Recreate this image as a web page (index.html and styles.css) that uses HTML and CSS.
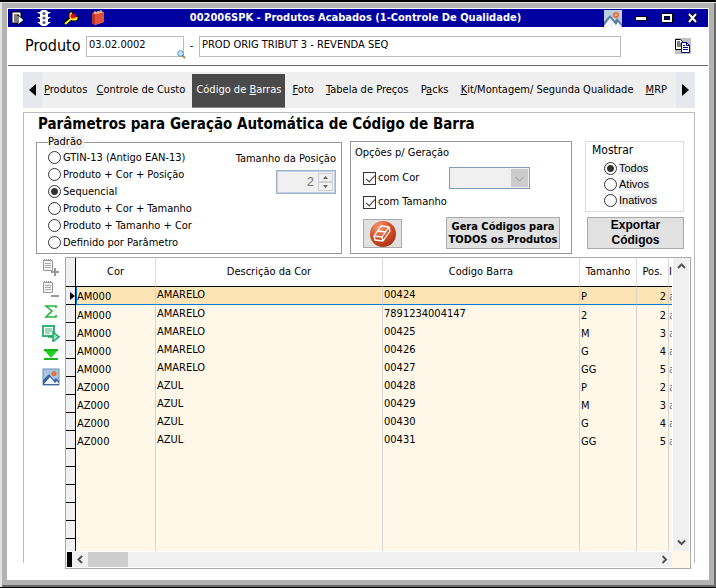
FILE: index.html
```html
<!doctype html>
<html lang="pt-BR">
    <head>
        <meta charset="utf-8">
        <title>002006SPK - Produtos Acabados</title>
        <link rel="stylesheet" href="styles.css">
    </head>

    <body>
    <div class="window">
        <header class="titlebar">
            <div class="titlebar-side">
                <button aria-label="Menu">
                    <svg width="14" height="16" viewBox="0 0 14 16"><path d="M1 2h9v11H1z" fill="#fff" stroke="#000"/><path d="M3 5h5M3 7h3M3 9h3M3 11h3" stroke="#000"/><path d="M7 5l6 5-6 5z" fill="#fff" stroke="#000"/></svg>
                </button>
                <button aria-label="Status">
                    <svg width="16" height="16" viewBox="0 0 16 16"><path d="M1 2h4v3zM15 2h-4v3zM1 7h4v3zM15 7h-4v3zM1 12h4v3zM15 12h-4v3z" fill="#fff"/><rect x="4" y="0" width="8" height="16" rx="3" fill="#fff"/><circle cx="8" cy="3.500" r="1.600" fill="#557"/><circle cx="8" cy="8" r="1.600" fill="#557"/><circle cx="8" cy="12.500" r="1.600" fill="#557"/></svg>
                </button>
                <button aria-label="Ferramentas">
                    <svg width="16" height="16" viewBox="0 0 16 16"><path d="M1 14l7-6" stroke="#000" stroke-width="4"/><path d="M7 2h3l-1 3 3 2 3-1v3l-2 2H9L6 8V4z" fill="#fe3" stroke="#000"/><path d="M2 14l7-6" stroke="#fe3" stroke-width="2"/><circle cx="10" cy="6" r="2.500" fill="#e00"/></svg>
                </button>
                <button aria-label="Caderno">
                    <svg width="16" height="16" viewBox="0 0 16 16"><path d="M2 3l8-2 4 1v10l-9 3-3-2z" fill="#f4a068"/><path d="M5 4l9-2v10l-9 3z" fill="#e0503c"/><path d="M2 3l3 1v11l-3-2z" fill="#b83424"/><path d="M5 1v3M8 1v3M11 0v3" stroke="#ffd9a8"/></svg>
                </button>
            </div>
            <h1>002006SPK - Produtos Acabados (1-Controle De Qualidade)</h1>
            <div class="titlebar-side titlebar-end">
                <button aria-label="Imagem">
                    <svg width="18" height="17" viewBox="0 0 18 17"><rect width="18" height="17" fill="#b9cede"/><path d="M0 12l6-7 5 6 2-3 5 6v3H0z" fill="#5f7d9c"/><path d="M0 16l6-8 6 7 2-3 4 5H0z" fill="#f2f6fa"/><circle cx="12" cy="5" r="3" fill="#e8693c"/><circle cx="12" cy="5" r="1.300" fill="#ffb98c"/></svg>
                </button>
                <button aria-label="Minimizar">
                    <svg width="14" height="14" viewBox="0 0 14 14"><rect x="1.500" y="5.500" width="11" height="4" fill="#fff" stroke="#000"/></svg>
                </button>
                <button aria-label="Maximizar">
                    <svg width="14" height="14" viewBox="0 0 14 14"><path d="M3 4h8v6H3z" fill="none" stroke="#000" stroke-width="4"/><path d="M3 4h8v6H3z" fill="none" stroke="#fff" stroke-width="2"/></svg>
                </button>
                <button aria-label="Fechar">
                    <svg width="14" height="14" viewBox="0 0 14 14"><path d="M3 3l7 8M10 3l-7 8" stroke="#000" stroke-width="4"/><path d="M3 3l7 8M10 3l-7 8" stroke="#fff" stroke-width="2"/></svg>
                </button>
            </div>
        </header>

        <div class="product">
            <label class="product-label" for="codigo">Produto</label>
            <div class="product-code">
                <input id="codigo" type="text" value="03.02.0002">
                <button class="search" aria-label="Pesquisar">
                    <svg width="9" height="9" viewBox="0 0 9 9"><path d="M5 5l3 3" stroke="#b5824a" stroke-width="2"/><circle cx="3.500" cy="3.500" r="2.800" fill="#c5e6fa" stroke="#4f93cf"/></svg>
                </button>
            </div>
            <span class="dash">-</span>
            <input class="product-name" type="text" value="PROD ORIG TRIBUT 3 - REVENDA SEQ" aria-label="Descrição do produto">
            <button class="copy" aria-label="Copiar">
                <svg width="16" height="16" viewBox="0 0 16 16"><path d="M.5 1.500h5l2 2v8h-7z" fill="#fff" stroke="#000"/><path d="M2 4h3M2 6h4M2 8h4" stroke="#000"/><path d="M6.500 4.500h5l3 3v7h-8z" fill="#fff" stroke="#008"/><path d="M11.500 4.500v3h3M8 7.500h2M8 9.500h5M8 11.500h5" fill="none" stroke="#008"/></svg>
            </button>
        </div>

        <nav class="tabs">
            <button class="tabs-arrow" aria-label="Anterior"><svg width="7" height="12" viewBox="0 0 7 12"><path d="M7 0v12L0 6z"/></svg></button>
            <div class="tabs-list">
                <a href="#"><u>P</u>rodutos</a>
                <a href="#"><u>C</u>ontrole de Custo</a>
                <a href="#" class="active">Código de <u>B</u>arras</a>
                <a href="#"><u>F</u>oto</a>
                <a href="#"><u>T</u>abela de Preços</a>
                <a href="#">P<u>a</u>cks</a>
                <a href="#"><u>K</u>it/Montagem/ Segunda Qualidade</a>
                <a href="#"><u>M</u>RP</a>
            </div>
            <button class="tabs-arrow" aria-label="Próximo"><svg width="7" height="12" viewBox="0 0 7 12"><path d="M0 0v12l7-6z"/></svg></button>
        </nav>

        <main class="panel">
            <h2>Parâmetros para Geração Automática de Código de Barra</h2>

            <div class="params">
                <fieldset class="box pattern">
                    <legend>Padrão</legend>
                    <div class="pattern-list">
                        <label><input type="radio" name="padrao">GTIN-13 (Antigo EAN-13)</label>
                        <label><input type="radio" name="padrao">Produto + Cor + Posição</label>
                        <label><input type="radio" name="padrao" checked>Sequencial</label>
                        <label><input type="radio" name="padrao">Produto + Cor + Tamanho</label>
                        <label><input type="radio" name="padrao">Produto + Tamanho + Cor</label>
                        <label><input type="radio" name="padrao">Definido por Parâmetro</label>
                    </div>
                    <div class="position">
                        <label for="posicao">Tamanho da Posição</label>
                        <div class="spinner">
                            <input id="posicao" type="text" value="2" disabled>
                            <div class="spinner-buttons">
                                <button disabled aria-label="Aumentar"><svg width="5" height="3" viewBox="0 0 5 3"><path d="M0 3h5L2.500 0z"/></svg></button>
                                <button disabled aria-label="Diminuir"><svg width="5" height="3" viewBox="0 0 5 3"><path d="M0 0h5L2.500 3z"/></svg></button>
                            </div>
                        </div>
                    </div>
                </fieldset>

                <div class="box options">
                    <span>Opções p/ Geração</span>
                    <div class="options-row">
                        <label><input type="checkbox" checked>com Cor</label>
                        <select disabled aria-label="Cor"><option></option></select>
                    </div>
                    <div class="options-row">
                        <label><input type="checkbox" checked>com Tamanho</label>
                    </div>
                    <div class="options-row options-actions">
                        <button class="btn eraser" aria-label="Limpar">
                            <svg width="26" height="26" viewBox="0 0 26 26"><defs><radialGradient id="ball" cx=".35" cy=".25" r=".8"><stop offset="0" stop-color="#f6a07c"/><stop offset=".5" stop-color="#d9512a"/><stop offset="1" stop-color="#a93412"/></radialGradient></defs><circle cx="13" cy="13" r="13" fill="url(#ball)"/><path d="M11 5l8 1 1 4-7 10-8-1-1-4zM4 15l8 1 7-10M12 16l1 4M8 10l8 1" fill="none" stroke="#fff" stroke-width="1.300" stroke-linejoin="round"/></svg>
                        </button>
                        <button class="btn">Gera Códigos para<br>TODOS os Produtos</button>
                    </div>
                </div>

                <div class="side">
                    <div class="show">
                        <span>Mostrar</span>
                        <label><input type="radio" name="mostrar" checked><b>Todos</b></label>
                        <label><input type="radio" name="mostrar"><b>Ativos</b></label>
                        <label><input type="radio" name="mostrar"><b>Inativos</b></label>
                    </div>
                    <button class="btn export">Exportar<br>Códigos</button>
                </div>
            </div>

            <div class="data">
                <div class="tools">
                    <button aria-label="Incluir">
                        <svg width="18" height="18" viewBox="0 0 18 18"><path d="M1.500 2.500h9v10h-9z" fill="#f4f4f4" stroke="#999"/><path d="M2 1.500h8" stroke="#888" stroke-dasharray="1 1"/><path d="M3 5.500h6M3 7.500h6M3 9.500h6" stroke="#aaa"/><path d="M13 10v8M9 14h8" stroke="#999" stroke-width="2"/></svg>
                    </button>
                    <button aria-label="Excluir">
                        <svg width="18" height="18" viewBox="0 0 18 18"><path d="M1.500 2.500h9v10h-9z" fill="#f4f4f4" stroke="#999"/><path d="M2 1.500h8" stroke="#888" stroke-dasharray="1 1"/><path d="M3 5.500h6M3 7.500h6M3 9.500h6" stroke="#aaa"/><path d="M9 16h8" stroke="#999" stroke-width="2"/></svg>
                    </button>
                    <button aria-label="Somar">
                        <svg width="18" height="18" viewBox="0 0 18 18"><path d="M14 6V4H4l6 5-6 6h10v-2" fill="none" stroke="#1fb83c" stroke-width="1.600"/></svg>
                    </button>
                    <button aria-label="Executar">
                        <svg width="18" height="18" viewBox="0 0 18 18"><path d="M1 2h11v10H1z" fill="#fff" stroke="#36b37a" stroke-width="2"/><path d="M3 5h7M3 7h7M3 9h5" stroke="#36b37a"/><path d="M6 13h5V8l6 5-6 4.500V14" fill="#a6e3c4" stroke="#23a567" stroke-width="1.500"/></svg>
                    </button>
                    <button aria-label="Último">
                        <svg width="18" height="18" viewBox="0 0 18 18"><path d="M2 4h14l-7 8z" fill="#1bd321"/><path d="M2 4h14M2 13h14" stroke="#19b31d" stroke-width="2"/></svg>
                    </button>
                    <button aria-label="Imagem">
                        <svg width="18" height="18" viewBox="0 0 18 18"><rect x="1" y="1" width="16" height="16" fill="#a9c6e6" stroke="#6c8cb8"/><path d="M1 12l6-6 5 6 2-2 3 3v4H1z" fill="#3c639c"/><path d="M2 16l6-7 5 6 2-2 2 3z" fill="#f2f6fa"/><circle cx="12" cy="5.500" r="2.600" fill="#e8743c"/></svg>
                    </button>
                </div>

                <div class="grid">
                    <div class="grid-view">
                        <table>
                            <colgroup>
                                <col class="col-mark"><col class="col-cor"><col class="col-desc"><col><col class="col-tam"><col class="col-pos"><col class="col-more">
                            </colgroup>
                            <thead>
                                <tr><th></th><th>Cor</th><th>Descrição da Cor</th><th>Codigo Barra</th><th>Tamanho</th><th>Pos.</th><th>I</th></tr>
                            </thead>
                            <tbody>
                                <tr class="selected"><td><svg width="5" height="8" viewBox="0 0 5 8"><path d="M0 0v8l5-4z"/></svg></td><td>AM000</td><td>AMARELO</td><td>00424</td><td>P</td><td>2</td><td>a</td></tr>
                                <tr><td></td><td>AM000</td><td>AMARELO</td><td>7891234004147</td><td>2</td><td>2</td><td>a</td></tr>
                                <tr><td></td><td>AM000</td><td>AMARELO</td><td>00425</td><td>M</td><td>3</td><td>a</td></tr>
                                <tr><td></td><td>AM000</td><td>AMARELO</td><td>00426</td><td>G</td><td>4</td><td>a</td></tr>
                                <tr><td></td><td>AM000</td><td>AMARELO</td><td>00427</td><td>GG</td><td>5</td><td>a</td></tr>
                                <tr><td></td><td>AZ000</td><td>AZUL</td><td>00428</td><td>P</td><td>2</td><td>a</td></tr>
                                <tr><td></td><td>AZ000</td><td>AZUL</td><td>00429</td><td>M</td><td>3</td><td>a</td></tr>
                                <tr><td></td><td>AZ000</td><td>AZUL</td><td>00430</td><td>G</td><td>4</td><td>a</td></tr>
                                <tr><td></td><td>AZ000</td><td>AZUL</td><td>00431</td><td>GG</td><td>5</td><td>a</td></tr>
                                <tr><td></td><td></td><td></td><td></td><td></td><td></td><td></td></tr>
                                <tr><td></td><td></td><td></td><td></td><td></td><td></td><td></td></tr>
                                <tr><td></td><td></td><td></td><td></td><td></td><td></td><td></td></tr>
                                <tr><td></td><td></td><td></td><td></td><td></td><td></td><td></td></tr>
                                <tr><td></td><td></td><td></td><td></td><td></td><td></td><td></td></tr>
                                <tr><td></td><td></td><td></td><td></td><td></td><td></td><td></td></tr>
                            </tbody>
                        </table>
                    </div>
                    <div class="scroll scroll-y">
                        <button aria-label="Subir"><svg width="9" height="7" viewBox="0 0 9 7"><path d="M1 5l3.500-3.500L8 5"/></svg></button>
                        <button aria-label="Descer"><svg width="9" height="7" viewBox="0 0 9 7"><path d="M1 1.500L4.500 5 8 1.500"/></svg></button>
                    </div>
                    <div class="scroll scroll-x">
                        <div class="split"></div>
                        <button aria-label="Esquerda"><svg width="7" height="9" viewBox="0 0 7 9"><path d="M5 1L1.500 4.500 5 8"/></svg></button>
                        <div class="thumb"></div>
                        <button class="right" aria-label="Direita"><svg width="7" height="9" viewBox="0 0 7 9"><path d="M1.500 1L5 4.500 1.500 8"/></svg></button>
                    </div>
                </div>
            </div>
        </main>
    </div>
    </body>
</html>
```
FILE: styles.css
```css
* {
    box-sizing: border-box;
}

body {
    margin: 0;
    background-color: #000;
    color: #000;
    font-family: Tahoma, "DejaVu Sans Condensed", "DejaVu Sans", sans-serif;
    font-size: 11px;
    line-height: 14px;
}

button, input, select {
    margin: 0;
    padding: 0;
    border: 0;
    background: none;
    color: inherit;
    font: inherit;
}

svg {
    display: block;
}

label {
    display: flex;
    align-items: center;
    white-space: nowrap;
}

/* ===== Window ===== */
.window {
    display: flex;
    flex-direction: column;
    height: 100vh;
    min-height: 560px;
    border-top: 2px solid #000;
    border-bottom: 1px solid #000;
    background-color: #fff;
    box-shadow: inset 2px 1px #e3e3e3, inset -2px -2px #6a6a6a, inset 7px 6px #b3b3b3, inset -7px -7px #b3b3b3;
    padding: 7px 8px;
}

.titlebar {
    display: flex;
    align-items: center;
    height: 18px;
    background-color: #0000a0;
    color: #fff;
}

.titlebar h1 {
    margin: 0;
    font-size: 11px;
    white-space: nowrap;
}

.titlebar-side {
    display: flex;
    flex: 1;
    align-items: center;
    gap: 11px;
    padding: 0 3px;
}

.titlebar-end {
    justify-content: flex-end;
    gap: 12px;
    padding-right: 8px;
}

.product {
    display: flex;
    align-items: center;
    height: 39px;
    padding: 0 17px;
    border-bottom: 1px solid #666;
}

.product input {
    width: 100%;
    height: 21px;
    padding: 0 2px 3px;
    border: 1px solid #bbb;
    background-color: #fff;
}

.product-label {
    width: 61px;
    font-size: 16px;
}

.product-code {
    position: relative;
    width: 98px;
}

.search {
    position: absolute;
    right: -2px;
    bottom: -2px;
}

.dash {
    width: 15px;
    text-align: center;
}

.product .product-name {
    flex: 1;
    margin-right: 54px;
}

.copy {
    background-color: #c0c0c0;
}

/* ===== Tabs ===== */
.tabs {
    display: flex;
    height: 36px;
    margin: 6px 13px 0 15px;
    background-color: #efefef;
}

.tabs-arrow {
    display: flex;
    align-items: center;
    justify-content: center;
    width: 19px;
    background-color: #e6e8ee;
}

.tabs-list {
    display: flex;
    flex: 1;
    justify-content: space-between;
    padding: 2px 4px 0 0;
}

.tabs-list a {
    padding: 9px 5px 0 2px;
    color: #000;
    text-decoration: none;
    white-space: nowrap;
}

.tabs-list a:nth-child(-n+2) {
    padding-right: 2px;
}

.tabs-list .active {
    padding: 9px 4px 0;
    background-color: #4a4a4a;
    border-bottom: 1px solid #888;
    color: #fff;
}

/* ===== Panel ===== */
.panel {
    display: flex;
    flex: 1;
    flex-direction: column;
    min-height: 0;
    margin: 4px 13px 17px 15px;
    border: 1px solid #bbb;
    border-bottom: 0;
}

.panel h2 {
    margin: 0;
    padding: 1px 14px;
    font-size: 15px;
    line-height: 20px;
}

.params {
    display: flex;
    gap: 8px;
    padding: 0 10px 0 12px;
}

.box {
    height: 113px;
    margin: 6px 0 0;
    border: 1px solid #999;
}

.pattern {
    display: flex;
    flex: 306 1 306px;
    justify-content: space-between;
    min-width: 0;
    height: 119px;
    margin: 0;
    padding: 0 5px 0 11px;
}

.pattern legend {
    height: 14px;
    padding: 0 2px 0 0;
    background-color: #f0f0f0;
}

.pattern-list label {
    height: 17px;
}

input[type=radio],
input[type=checkbox] {
    appearance: none;
    flex: none;
    width: 13px;
    height: 13px;
    margin-right: 2px;
    border: 1px solid #333;
    background-color: #fff;
}

input[type=radio] {
    border-radius: 50%;
}

input[type=radio]:checked {
    background: radial-gradient(#333 3px, #fff 4px);
}

input[type=checkbox]::after {
    content: "";
    display: block;
    width: 4px;
    height: 8px;
    margin-left: 4px;
    border: solid #333;
    border-width: 0 1px 1px 0;
    transform: rotate(42deg);
}

input[type=checkbox]:not(:checked)::after {
    display: none;
}

.position {
    display: flex;
    flex-direction: column;
    align-items: flex-end;
    gap: 4px;
    padding-top: 3px;
}

.spinner {
    display: flex;
    width: 60px;
    height: 24px;
    padding: 2px;
    border: 1px solid #a3b1c4;
    box-shadow: inset 0 0 0 1px #bcd3ee;
    background-color: #f0f0f0;
}

.spinner input {
    flex: 1;
    min-width: 0;
    padding-right: 4px;
    color: #777;
    font-family: "Liberation Sans", sans-serif;
    font-size: 13px;
    text-align: right;
}

.spinner-buttons {
    display: flex;
    flex-direction: column;
    width: 15px;
}

.spinner-buttons button {
    display: flex;
    flex: 1;
    align-items: center;
    justify-content: center;
    border: 1px solid #d0d0d0;
    fill: #666;
}

.options {
    display: flex;
    flex: 222 1 222px;
    flex-direction: column;
    padding: 4px 11px 4px 12px;
}

.options > span {
    margin-left: -8px;
}

.options-row {
    display: flex;
    align-items: center;
    justify-content: space-between;
    height: 24px;
}

.options-row:nth-of-type(1) {
    margin-top: 6px;
}

.options-row select {
    appearance: none;
    width: 81px;
    height: 22px;
    margin-right: 30px;
    border: 1px solid #7f9db9;
    background: url("data:image/svg+xml,%3Csvg xmlns='http://www.w3.org/2000/svg' width='17' height='18'%3E%3Cpath d='M0 0h17v18H0z' fill='%23ccc'/%3E%3Cpath d='M4.500 8l4 4 4-4' fill='none' stroke='%23999'/%3E%3C/svg%3E") no-repeat right 1px center #f0f0f0;
    opacity: 1;
}

.options-actions {
    flex: 1;
    align-items: flex-start;
    padding-top: 3px;
}

.btn {
    height: 32px;
    border: 1px solid #aaa;
    background-color: #e1e1e1;
    font-weight: bold;
    line-height: 13px;
    white-space: nowrap;
}

.options-actions .btn {
    width: 114px;
}

.options-actions .eraser {
    display: flex;
    align-items: center;
    justify-content: center;
    width: 39px;
    height: 29px;
    margin-top: 2px;
}

.side {
    display: flex;
    flex: 99 1 99px;
    flex-direction: column;
    gap: 5px;
    margin: 6px 0 0 5px;
}

.show {
    height: 71px;
    padding: 0 6px;
    border: 1px solid #ddd;
}

.show span {
    display: block;
    height: 18px;
    font-size: 12px;
    line-height: 16px;
}

.show label {
    height: 16px;
    margin-left: 12px;
    font-family: "Liberation Sans", sans-serif;
}

.show b {
    background-color: #f0f0f0;
    font-weight: normal;
    line-height: 13px;
}

.export {
    margin-left: 2px;
    font-family: "Liberation Sans", sans-serif;
    font-size: 12px;
    line-height: 15px;
}

/* ===== Data grid ===== */
.data {
    display: flex;
    flex: 1;
    min-height: 0;
    margin: 3px 3px -6px 18px;
}

.tools {
    display: flex;
    flex-direction: column;
    gap: 4px;
    width: 23px;
    padding-top: 1px;
}

.grid {
    display: grid;
    flex: 1;
    grid-template-columns: 1fr 18px;
    grid-template-rows: 1fr 17px;
    min-width: 0;
    border: 1px solid #aaa;
    background-color: #fff8e8;
}

.grid-view {
    min-height: 0;
    overflow: hidden;
}

table {
    width: 100%;
    table-layout: fixed;
    border-collapse: separate;
    border-spacing: 0;
}

.col-mark { width: 10px; }
.col-cor { width: 80px; }
.col-desc { width: 227px; }
.col-tam { width: 57px; }
.col-pos { width: 32px; }
.col-more { width: 3px; }

th {
    height: 29px;
    padding: 0;
    border-right: 1px solid #ddd;
    border-bottom: 1px solid #000;
    background-color: #fff;
    font-weight: normal;
    white-space: nowrap;
    overflow: hidden;
}

td {
    height: 18px;
    padding: 2px 1px 0;
    border-right: 1px solid #d4d4d4;
    line-height: 15px;
    white-space: nowrap;
    overflow: hidden;
}

td:nth-child(3),
td:nth-child(4) {
    padding: 0 1px 2px;
}

td:nth-child(6) {
    padding-right: 2px;
    text-align: right;
}

th:last-child,
td:last-child {
    padding-left: 0;
    border-right: 0;
}

td:last-child {
    color: #777;
}

th:first-child,
td:first-child {
    padding: 0 0 0 4px;
    border-right: 1px solid #000;
    background-color: #f0f0f0;
}

td:first-child {
    border-bottom: 1px solid #000;
}

.selected td:not(:first-child) {
    background-color: #fde4b4;
    border-bottom: 1px solid #0078d7;
}

.selected td:nth-child(2) {
    box-shadow: inset 1px 0 #0078d7;
}

.scroll {
    display: flex;
    background-color: #f0f0f0;
}

.scroll button {
    display: flex;
    align-items: center;
    justify-content: center;
    width: 16px;
    height: 17px;
}

.scroll path {
    fill: none;
    stroke: #555;
    stroke-width: 2;
}

.scroll-y {
    flex-direction: column;
    justify-content: space-between;
    border: solid #fff;
    border-width: 0 1px;
}

.scroll-x {
    border: solid #fff;
    border-width: 1px 0;
}

.scroll-x button {
    height: 15px;
}

.split {
    width: 5px;
    margin-left: 1px;
    background-color: #000;
}

.thumb {
    width: 40px;
    background-color: #cdcdcd;
}

.scroll-x .right {
    margin-left: auto;
}
```
